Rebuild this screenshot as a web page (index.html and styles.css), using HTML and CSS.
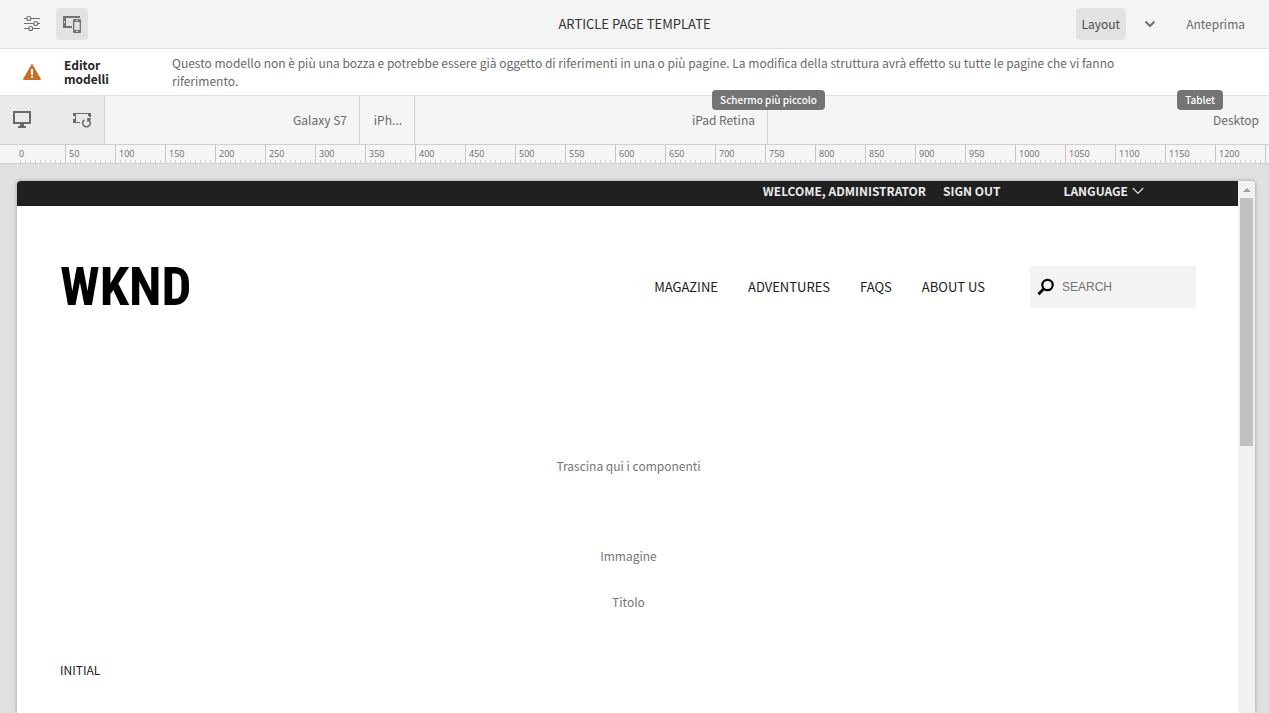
FILE: index.html
```html
<!DOCTYPE html>
<html lang="it">
<head>
<meta charset="utf-8">
<meta name="viewport" content="width=device-width, initial-scale=1">
<title>Article Page Template</title>
<link rel="stylesheet" href="styles.css">
</head>
<body>
<header class="toolbar">
  <div class="toolbar-side">
    <button class="tool" type="button" aria-label="Impostazioni">
      <svg width="18" height="18" viewBox="0 0 18 18" fill="none" stroke="#707070" stroke-width="1.1"><path d="M1 3.500h2.700M8 3.500h9M1 8.500h9.500M15 8.500h2M1 13.500h4.500M10 13.500h7"/><circle cx="5.800" cy="3.500" r="2"/><circle cx="12.800" cy="8.500" r="2"/><circle cx="7.700" cy="13.500" r="2"/></svg>
    </button>
    <button class="tool tool-on" type="button" aria-label="Emulatore">
      <svg width="20" height="20" viewBox="0 0 20 20" fill="#707070"><path fill-rule="evenodd" d="M1 2h17v2H4v8h6v2H1zM2 7v2h1V7z"/><path fill-rule="evenodd" d="M12 5h6q1 0 1 1v12q0 1-1 1h-6q-1 0-1-1V6q0-1 1-1zM12.300 8v8h5.400V8zM14 6v1h2V6zM14 17v1h2v-1z"/></svg>
    </button>
  </div>
  <h1 class="toolbar-title">ARTICLE PAGE TEMPLATE</h1>
  <div class="toolbar-side toolbar-end">
    <button class="tool tool-on tool-label" type="button">Layout</button>
    <button class="tool" type="button" aria-label="Altre modalità">
      <svg width="12" height="8" viewBox="0 0 12 8" fill="none" stroke="#707070" stroke-width="2"><path d="M1.500 1.500 6 6l4.500-4.500"/></svg>
    </button>
    <button class="tool tool-text" type="button">Anteprima</button>
  </div>
</header>

<section class="banner">
  <svg class="banner-icon" width="18" height="16" viewBox="0 0 18 16"><path fill="#cb6f26" d="M8.400.5q.6-.9 1.200 0l8.200 14.300q.4 1.200-.7 1.200H.9q-1.100 0-.7-1.200z"/><path fill="#fff" d="M8 5h2v6H8zM8 12h2v2H8z"/></svg>
  <h2 class="banner-title">Editor modelli</h2>
  <p class="banner-text">Questo modello non è più una bozza e potrebbe essere già oggetto di riferimenti in una o più pagine. La modifica della struttura avrà effetto su tutte le pagine che vi fanno riferimento.</p>
</section>

<nav class="devices" aria-label="Dispositivi">
  <div class="device-tools">
    <button class="device-tool" type="button" aria-label="Desktop">
      <svg width="18" height="18" viewBox="0 0 18 18" fill="#6a6a6a"><path fill-rule="evenodd" d="M0 0h18v13H0zM2 2v9h14V2z"/><path d="M7 13h4v2h2v2H5v-2h2z"/></svg>
    </button>
    <button class="device-tool" type="button" aria-label="Ruota dispositivo">
      <svg width="18" height="18" viewBox="0 0 18 18" fill="none" stroke="#6a6a6a"><path d="M1 2.500h16M1 11.500h6"/><path stroke-width="2" d="M1 2v3M1 8v4M17 2v4"/><path d="M2.500 2v10M15.500 2v3"/><path stroke-width="1.500" d="M11.500 8.800a3.800 3.800 0 1 0 4 0"/><path fill="#6a6a6a" stroke="none" d="M14 7h4v1l-3.500 3.500z"/></svg>
    </button>
  </div>
  <a class="device device-small" href="#">Galaxy S7</a>
  <a class="device device-phone" href="#">iPh...</a>
  <a class="device device-medium" href="#">iPad Retina<span class="tip tip-small">Schermo più piccolo</span></a>
  <a class="device device-desktop" href="#">Desktop<span class="tip tip-tablet">Tablet</span></a>
</nav>

<ol class="ruler">
  <li>0</li><li>50</li><li>100</li><li>150</li><li>200</li><li>250</li><li>300</li><li>350</li><li>400</li><li>450</li><li>500</li><li>550</li><li>600</li><li>650</li><li>700</li><li>750</li><li>800</li><li>850</li><li>900</li><li>950</li><li>1000</li><li>1050</li><li>1100</li><li>1150</li><li>1200</li><li></li>
</ol>

<main class="stage">
  <div class="frame">
    <div class="site">
      <div class="site-top">
        <a href="#">WELCOME, ADMINISTRATOR</a>
        <a href="#">SIGN OUT</a>
        <button class="language" type="button">LANGUAGE
          <svg width="12" height="8" viewBox="0 0 12 8" fill="none" stroke="#ddd" stroke-width="1.200"><path d="M.8 1 6 6.500 11.200 1"/></svg>
        </button>
      </div>
      <div class="site-header">
        <a class="logo" href="#">WKND</a>
        <nav class="site-nav">
          <a href="#">MAGAZINE</a>
          <a href="#">ADVENTURES</a>
          <a href="#">FAQS</a>
          <a href="#">ABOUT US</a>
        </nav>
        <label class="search">
          <svg width="18" height="18" viewBox="0 0 18 18" fill="none" stroke="#000"><circle cx="10.500" cy="7" r="5.200" stroke-width="2.200"/><path stroke-width="2.800" d="M6.500 11 1.500 16.200"/></svg>
          <input type="search" placeholder="SEARCH" aria-label="SEARCH">
        </label>
      </div>
      <div class="slot slot-drop">Trascina qui i componenti</div>
      <div class="slot">Immagine</div>
      <div class="slot">Titolo</div>
      <p class="initial">INITIAL</p>
    </div>
    <div class="scroll">
      <button class="scroll-up" type="button" aria-label="Scorri su"></button>
      <div class="scroll-thumb"></div>
    </div>
  </div>
</main>
</body>
</html>
```
FILE: styles.css
```css
* { box-sizing: border-box; }

body {
  margin: 0;
  height: 100vh;
  display: flex;
  flex-direction: column;
  overflow: hidden;
  background: #e0e0e0;
  color: #6a6a6a;
  font: 12px/18px "Noto Sans CJK SC", "Open Sans", sans-serif;
}

h1, h2, p, ol { margin: 0; padding: 0; }
a { color: inherit; text-decoration: none; }
button { margin: 0; padding: 0; border: 0; background: none; color: inherit; font: inherit; }
svg { flex: none; display: block; }

.toolbar {
  flex: none;
  display: flex;
  align-items: center;
  height: 49px;
  padding: 0 16px;
  background: #f4f4f4;
  border-bottom: 1px solid #e0e0e0;
}
.toolbar-side { flex: 1; display: flex; gap: 8px; }
.toolbar-end { justify-content: flex-end; }
.toolbar-title { color: #323232; font-size: 13px; font-weight: 400; }
.tool {
  min-width: 32px;
  height: 32px;
  display: flex;
  align-items: center;
  justify-content: center;
  border-radius: 4px;
}
.tool-on { background: #e2e2e2; }
.tool-label { padding: 0 6px; color: #4b4b4b; }
.tool-text { padding: 0 8px; margin-left: 4px; }

.banner {
  flex: none;
  display: flex;
  align-items: center;
  padding: 5px 120px 5px 23px;
  background: #fff;
  border-bottom: 1px solid #e0e0e0;
}
.banner-icon { margin-right: 23px; }
.banner-title { flex: none; width: 108px; padding-right: 50px; color: #252525; font-size: 12px; line-height: 14px; }
.banner-text { flex: 1; }

.devices {
  flex: none;
  display: flex;
  height: 49px;
  background: #f5f5f5;
  border-bottom: 1px solid #d0d0d0;
}
.device-tools {
  flex: none;
  display: flex;
  align-items: center;
  gap: 42px;
  width: 105px;
  padding-left: 13px;
  background: #eaeaea;
  border-right: 1px solid #d0d0d0;
}
.device {
  flex: none;
  position: relative;
  display: flex;
  align-items: center;
  justify-content: flex-end;
  padding-right: 12px;
  border-right: 1px solid #d0d0d0;
}
.device-small { width: 255px; }
.device-phone { width: 55px; }
.device-medium { width: 353px; }
.device-desktop { flex: 1; padding-right: 10px; border-right: 0; }
.tip {
  position: absolute;
  top: -6px;
  padding: 0 8px;
  border-radius: 4px;
  background: #747474;
  color: #fff;
  font-size: 10px;
  font-weight: 500;
  line-height: 20px;
  white-space: nowrap;
}
.tip-small { right: -58px; }
.tip-tablet { right: 46px; }

.ruler {
  flex: none;
  display: flex;
  height: 19px;
  padding-left: 15px;
  overflow: hidden;
  list-style: none;
  background: #f5f5f5;
  border-bottom: 1px solid #d0d0d0;
  font: 9px/18px "Open Sans", sans-serif;
}
.ruler li {
  flex: none;
  width: 50px;
  padding-left: 3px;
  border-left: 1px solid #c8c8c8;
  background: repeating-linear-gradient(90deg, transparent 0 4px, #d0d0d0 4px 5px) left bottom / 100% 3px no-repeat;
}
.ruler li:first-child { border-color: transparent; }

.stage { flex: 1; min-height: 0; display: flex; padding: 17px 14px 0 17px; }
.frame {
  flex: 1;
  min-width: 0;
  display: flex;
  overflow: hidden;
  background: #fff;
  border-radius: 4px 4px 0 0;
  box-shadow: 0 0 4px rgba(0, 0, 0, .3);
}
.site { flex: 1; min-width: 0; overflow: hidden; }
.site-top {
  display: flex;
  justify-content: flex-end;
  height: 25px;
  padding-right: 94px;
  background: #202020;
  color: #ebebeb;
  font-size: 12px;
  font-weight: 700;
  line-height: 20px;
  gap: 17px;
}
.language { display: flex; align-items: center; gap: 4px; height: 20px; margin-left: 46px; }
.site-header {
  display: flex;
  align-items: center;
  height: 161px;
  padding: 0 42px 0 43px;
  color: #202020;
}
.logo { margin-right: auto; color: #000; font: bold 53px/60px "Roboto Condensed", "Liberation Sans Narrow", sans-serif; }
.site-nav { display: flex; gap: 30px; margin-right: 45px; font-size: 13px; }
.search {
  flex: none;
  display: flex;
  align-items: center;
  gap: 7px;
  width: 166px;
  height: 42px;
  padding: 0 7px;
  background: #f3f3f3;
}
.search input {
  min-width: 0;
  flex: 1;
  padding: 0;
  border: 0;
  background: none;
  font: 12px/18px "Liberation Sans", Arial, sans-serif;
}
.search input::placeholder { color: #757575; }
.slot { display: flex; align-items: center; justify-content: center; height: 46px; padding-left: 2px; color: #757575; }
.slot-drop { height: 134px; margin-top: 32px; }
.initial { padding: 36px 43px; color: #202020; }

.scroll { flex: none; width: 17px; background: #f1f1f1; }
.scroll-up { display: flex; width: 17px; height: 17px; align-items: center; justify-content: center; }
.scroll-up::before { content: ""; border: 4px solid transparent; border-top: 0; border-bottom-color: #a0a0a0; }
.scroll-thumb { height: 248px; margin: 0 2px; background: #c1c1c1; }
```
